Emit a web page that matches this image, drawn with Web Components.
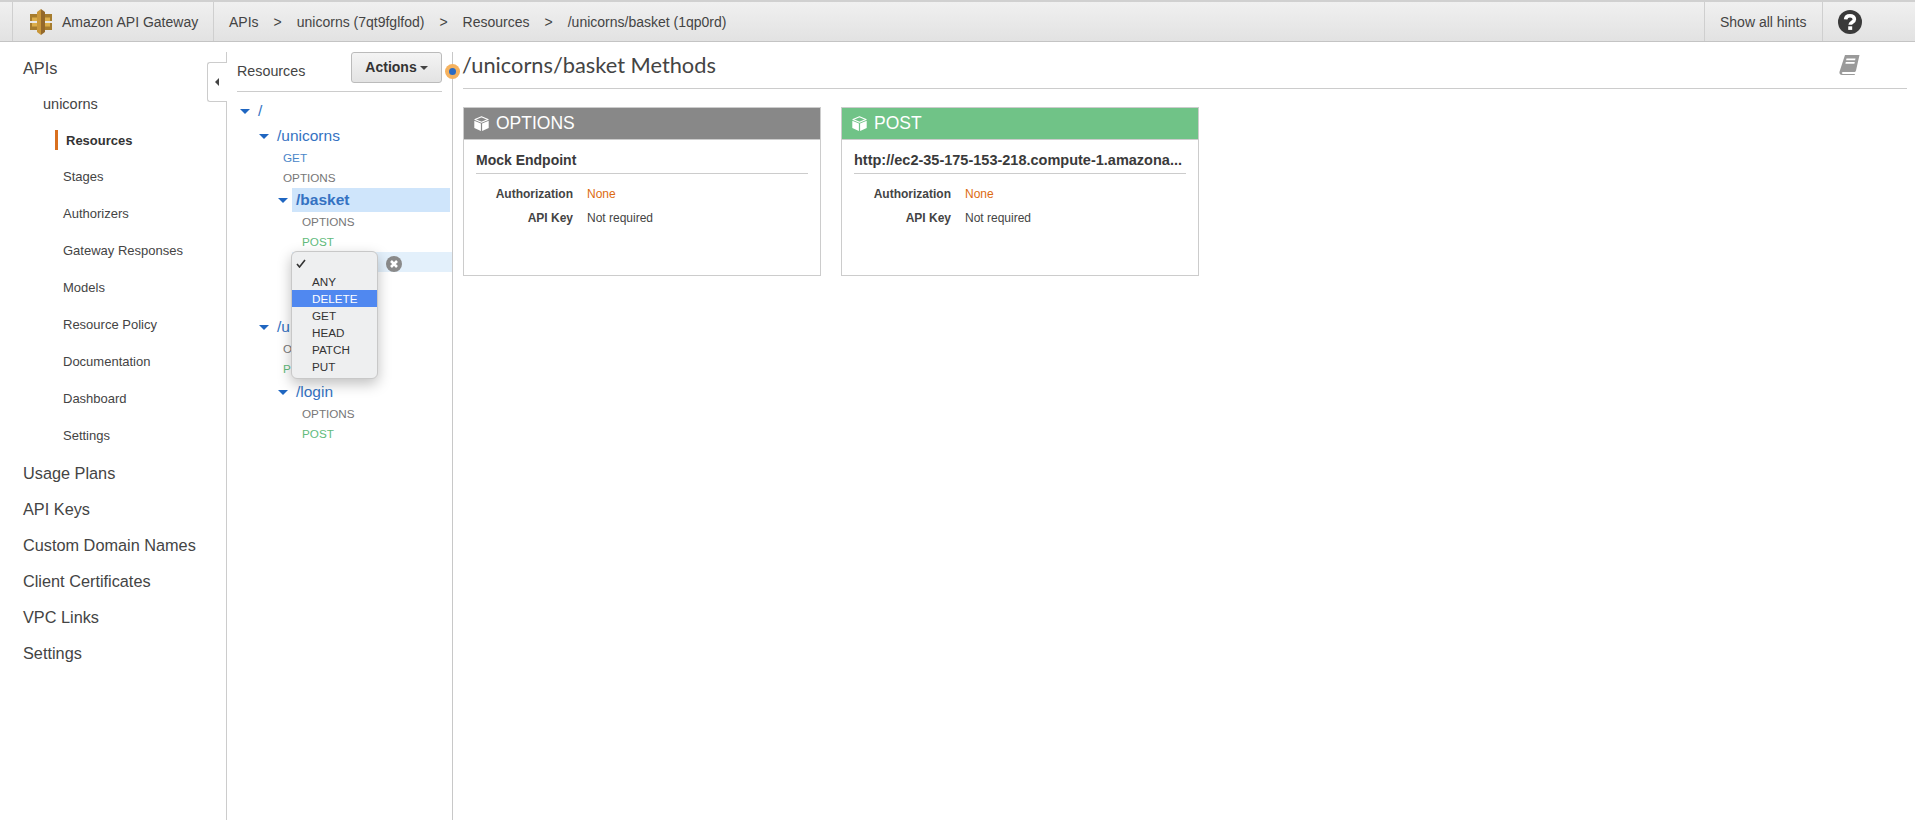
<!DOCTYPE html>
<html>
<head>
<meta charset="utf-8">
<title>Amazon API Gateway</title>
<style>
  html, body { margin: 0; height: 100%; background: #fff; overflow: hidden; }
  body { font-family: "Liberation Sans", Arial, sans-serif; color: #444; display: flex; flex-direction: column; height: 820px; }
  .body-row { display: flex; flex: 1; min-height: 0; }
</style>
</head>
<body>
<aws-topbar>
  <top-crumb>APIs</top-crumb>
  <top-crumb>unicorns (7qt9fglfod)</top-crumb>
  <top-crumb>Resources</top-crumb>
  <top-crumb last>/unicorns/basket (1qp0rd)</top-crumb>
</aws-topbar>
<div class="body-row">
  <side-nav>
    <nav-link level="0">APIs</nav-link>
    <nav-link level="1">unicorns</nav-link>
    <nav-link level="2" active>Resources</nav-link>
    <nav-link level="2">Stages</nav-link>
    <nav-link level="2">Authorizers</nav-link>
    <nav-link level="2">Gateway Responses</nav-link>
    <nav-link level="2">Models</nav-link>
    <nav-link level="2">Resource Policy</nav-link>
    <nav-link level="2">Documentation</nav-link>
    <nav-link level="2">Dashboard</nav-link>
    <nav-link level="2">Settings</nav-link>
    <nav-link level="0" style="margin-top:1px">Usage Plans</nav-link>
    <nav-link level="0">API Keys</nav-link>
    <nav-link level="0">Custom Domain Names</nav-link>
    <nav-link level="0">Client Certificates</nav-link>
    <nav-link level="0">VPC Links</nav-link>
    <nav-link level="0">Settings</nav-link>
  </side-nav>
  <resource-panel>
    <tree-res depth="0">/</tree-res>
    <tree-res depth="1" style="margin-top:1px">/unicorns</tree-res>
    <tree-method depth="2" kind="get">GET</tree-method>
    <tree-method depth="2">OPTIONS</tree-method>
    <tree-res depth="2" selected>/basket</tree-res>
    <tree-method depth="3">OPTIONS</tree-method>
    <tree-method depth="3" kind="post">POST</tree-method>
    <new-method-row></new-method-row>
    <tree-res depth="1" style="margin-top:43px">/u</tree-res>
    <tree-method depth="2">O</tree-method>
    <tree-method depth="2" kind="post">P</tree-method>
    <tree-res depth="2" style="margin-top:1px">/login</tree-res>
    <tree-method depth="3">OPTIONS</tree-method>
    <tree-method depth="3" kind="post">POST</tree-method>
    <method-menu slot="overlay">
      <menu-opt checked></menu-opt>
      <menu-opt>ANY</menu-opt>
      <menu-opt hot>DELETE</menu-opt>
      <menu-opt>GET</menu-opt>
      <menu-opt>HEAD</menu-opt>
      <menu-opt>PATCH</menu-opt>
      <menu-opt>PUT</menu-opt>
    </method-menu>
  </resource-panel>
  <main-pane heading="/unicorns/basket Methods">
    <method-card verb="OPTIONS" color="#888888" endpoint="Mock Endpoint" ep-size="14"></method-card>
    <method-card verb="POST" color="#70c387" endpoint="http://ec2-35-175-153-218.compute-1.amazona..." ep-size="14.500"></method-card>
  </main-pane>
</div>

<script>
function shadow(el, html) {
  el.attachShadow({mode: 'open'}).innerHTML = html;
}

class AwsTopbar extends HTMLElement {
  constructor() {
    super();
    shadow(this, `<style>
      :host { display: flex; align-items: stretch; height: 39px; flex: none; font-size: 14px; color: #444;
        border-top: 2px solid #d0d0d0; border-bottom: 1px solid #c4c4c4;
        background: linear-gradient(#f0f0f0, #e2e2e2); }
      .cell { display: flex; align-items: center; border-left: 1px solid #cfcfcf; box-sizing: border-box; }
      .lead { width: 12px; border-left: 0; }
      .brand { width: 201px; padding-left: 17px; gap: 10px; }
      .crumbs { flex: 1; padding-left: 15px; }
      .hints { width: 118px; padding-left: 15px; }
      .help { width: 93px; padding-left: 15px; }
      svg { display: block; flex: none; }
    </style>
    <div class="cell lead"></div>
    <div class="cell brand">
      <svg width="22" height="26" viewBox="0 0 22 26">
        <path fill="#a67c2d" d="M0 5h7v7H0zM0 14h7v7H0zM15 5h7v7h-7zM15 14h7v7h-7z"/>
        <path fill="#dcae4a" d="M2 8.500h5V12H2zM2 14h5v3.500H2zM15 8.500h5V12h-5zM15 14h5v3.500h-5z"/>
        <path fill="#c9973a" d="M7 3l4-3v26l-4-3z"/>
        <path fill="#94692a" d="M15 3l-4-3v26l4-3z"/>
      </svg>
      <span>Amazon API Gateway</span>
    </div>
    <div class="cell crumbs"><slot></slot></div>
    <div class="cell hints">Show all hints</div>
    <div class="cell help">
      <svg width="24" height="24" viewBox="0 0 24 24">
        <circle cx="12" cy="12" r="12" fill="#3a3a3a"/>
        <path fill="none" stroke="#fff" stroke-width="3.600" d="M7.600 9.400C7.800 7 9.600 5.700 12 5.700c2.600 0 4.400 1.400 4.400 3.500 0 3-4.200 3-4.200 5.600"/>
        <rect x="10.200" y="16.300" width="4" height="3.600" fill="#fff"/>
      </svg>
    </div>`);
  }
}
customElements.define('aws-topbar', AwsTopbar);

class TopCrumb extends HTMLElement {
  constructor() {
    super();
    shadow(this, `<style>
      :host { display: inline-flex; }
      i { font-style: normal; margin: 0 15px; }
    </style><slot></slot>${this.hasAttribute('last') ? '' : '<i>&gt;</i>'}`);
  }
}
customElements.define('top-crumb', TopCrumb);

class SideNav extends HTMLElement {
  constructor() {
    super();
    shadow(this, `<style>
      :host { display: block; width: 227px; flex: none; box-sizing: border-box; padding-top: 8px;
        background: linear-gradient(#ccc, #ccc) 226px 10px / 1px 100% no-repeat; }
    </style><slot></slot>`);
  }
}
customElements.define('side-nav', SideNav);

class NavLink extends HTMLElement {
  constructor() {
    super();
    let level = this.getAttribute('level');
    let left = {0: 23, 1: 43, 2: 63}[level];
    let size = level == 2 ? 13 : level == 1 ? 14.500 : 16.300;
    let active = this.hasAttribute('active');
    let h = level == 2 && !active ? 37 : 36;
    shadow(this, `<style>
      :host { display: flex; align-items: center; height: ${h}px; padding-left: ${left}px; font-size: ${size}px; color: #444; position: relative; }
      b { color: #333; padding-left: 3px; }
      u { position: absolute; left: 55px; top: 8px; width: 3px; height: 20px; background: #d9701f; }
    </style>${active ? '<u></u><b><slot></slot></b>' : '<slot></slot>'}`);
  }
}
customElements.define('nav-link', NavLink);

class ResourcePanel extends HTMLElement {
  constructor() {
    super();
    shadow(this, `<style>
      :host { display: block; width: 226px; flex: none; box-sizing: border-box; position: relative; padding: 10px 0 0 10px;
        background: linear-gradient(#c8c8c8, #c8c8c8) 225px 10px / 1px 100% no-repeat; }
      .head { display: flex; align-items: center; justify-content: space-between; width: 205px; height: 40px; box-sizing: border-box; padding-bottom: 9px; border-bottom: 1px solid #ccc; font-size: 14.300px; }
      .head span { margin-top: 7px; }
      button { width: 91px; height: 31px; font: bold 14px "Liberation Sans", Arial, sans-serif; color: #333; border: 1px solid #bbb; border-radius: 3px; background: linear-gradient(#f4f4f4, #e3e3e3); padding: 0; }
      button i { display: inline-block; margin-left: 3px; vertical-align: 2px; border: 4px solid transparent; border-top-color: #444; border-bottom: 0; }
      .tree { margin-top: 7px; margin-left: -10px; }
      .tab { position: absolute; left: -20px; top: 20px; width: 20px; height: 40px; box-sizing: border-box; background: #fff; border: 1px solid #ccc; border-right: 0; border-radius: 3px 0 0 3px; display: flex; align-items: center; justify-content: center; }
      .tab i { border: 4px solid transparent; border-right-color: #444; border-left: 0; margin-right: 2px; }
      .beacon { position: absolute; right: -7px; top: 22px; width: 15px; height: 15px; border-radius: 50%; background: #f5b25f; display: flex; align-items: center; justify-content: center; z-index: 2; }
      .beacon i { width: 7px; height: 7px; border-radius: 50%; background: #2a6bc4; }
    </style>
    <div class="tab"><i></i></div>
    <div class="head"><span>Resources</span><button>Actions<i></i></button></div>
    <div class="tree"><slot></slot></div>
    <slot name="overlay"></slot>
    <div class="beacon"><i></i></div>`);
  }
}
customElements.define('resource-panel', ResourcePanel);

class TreeRes extends HTMLElement {
  constructor() {
    super();
    let depth = +this.getAttribute('depth');
    let sel = this.hasAttribute('selected');
    shadow(this, `<style>
      :host { display: flex; align-items: center; height: 24px; padding-left: ${13 + depth * 19}px; color: #3472c2; font-size: 15.500px; }
      i { flex: none; width: 0; border: 5px solid transparent; border-top: 5px solid #1f66c1; border-bottom: 0; }
      span { display: block; flex: 1; margin-left: 4px; padding-left: 4px; line-height: 24px; ${sel ? 'background: #cfe5fb; font-weight: bold; margin-right: 3px;' : ''} }
    </style><i></i><span><slot></slot></span>`);
  }
}
customElements.define('tree-res', TreeRes);

class TreeMethod extends HTMLElement {
  constructor() {
    super();
    let depth = +this.getAttribute('depth');
    let kind = this.getAttribute('kind');
    let color = kind == 'get' ? '#4a86c8' : kind == 'post' ? '#62bb7c' : '#777';
    shadow(this, `<style>
      :host { display: flex; align-items: center; height: 20px; box-sizing: border-box; padding: 0 0 2px ${18 + depth * 19}px; color: ${color}; font-size: 11.700px; }
    </style><slot></slot>`);
  }
}
customElements.define('tree-method', TreeMethod);

class NewMethodRow extends HTMLElement {
  constructor() {
    super();
    shadow(this, `<style>
      :host { display: flex; align-items: center; height: 20px; background: #e3f0fb; margin: 0 1px 0 65px; padding-left: 94px; }
      svg { display: block; margin-top: 4px; }
    </style>
    <svg width="16" height="16" viewBox="0 0 16 16">
      <circle cx="8" cy="8" r="8" fill="#8a8a8a"/>
      <path stroke="#fff" stroke-width="2.600" d="M5 5l6 6M11 5l-6 6"/>
    </svg>`);
  }
}
customElements.define('new-method-row', NewMethodRow);

class MethodMenu extends HTMLElement {
  constructor() {
    super();
    shadow(this, `<style>
      :host { display: block; position: absolute; left: 64px; top: 209px; width: 87px; box-sizing: border-box; padding: 4px 0 3px; background: #eeeff0; border: 1px solid #c8c8c8; border-radius: 6px; box-shadow: 0 5px 14px rgba(0,0,0,.25); z-index: 3; }
    </style><slot></slot>`);
  }
}
customElements.define('method-menu', MethodMenu);

class MenuOpt extends HTMLElement {
  constructor() {
    super();
    let hot = this.hasAttribute('hot');
    let checked = this.hasAttribute('checked');
    shadow(this, `<style>
      :host { display: block; position: relative; height: 17px; line-height: 17px; padding-left: 20px; font-size: 11.700px; color: ${hot ? '#fff' : '#333'}; background: ${hot ? '#5088f0' : 'transparent'}; }
      svg { position: absolute; left: 4px; top: 3px; }
    </style>${checked ? '<svg width="10" height="9" viewBox="0 0 10 9"><path fill="none" stroke="#333" stroke-width="1.600" d="M1 5l2.500 3L9 1"/></svg>' : ''}<slot></slot>`);
  }
}
customElements.define('menu-opt', MenuOpt);

class MainPane extends HTMLElement {
  constructor() {
    super();
    shadow(this, `<style>
      :host { display: block; flex: 1; min-width: 0; padding: 8px 8px 0 10px; box-sizing: border-box; }
      .title { display: flex; align-items: center; justify-content: space-between; height: 39px; box-sizing: border-box; border-bottom: 1px solid #ccc; padding-right: 47px; padding-bottom: 9px; }
      h1 { margin: 0 0 0 -1px; font: 400 21.800px Lato, sans-serif; color: #444; }
      .cards { display: flex; gap: 20px; margin-top: 18px; }
      svg { display: block; }
    </style>
    <div class="title"><h1>${this.getAttribute('heading')}</h1>
      <svg width="21" height="20" viewBox="0 0 21 20">
        <path fill="#9a9a9a" d="M6 0h14.500L17 15.500c-.3 1-1 1.500-2 1.500H4c-1 0-1.200.8-1.200 1s.2 1 1.200 1h12l-.4 1H3C1.200 20 0 18.800.500 16.800z"/>
        <path fill="#fff" d="M7.500 3.500h9l-.4 1.800h-9zM6.800 7h9l-.4 1.800h-9z"/>
      </svg>
    </div>
    <div class="cards"><slot></slot></div>`);
  }
}
customElements.define('main-pane', MainPane);

class MethodCard extends HTMLElement {
  constructor() {
    super();
    shadow(this, `<style>
      :host { display: block; width: 358px; height: 169px; box-sizing: border-box; border: 1px solid #ccc; }
      header { display: flex; align-items: center; gap: 7px; height: 32px; box-sizing: border-box; padding-left: 10px; background: ${this.getAttribute('color')}; color: #fff; font-size: 17.500px; border-bottom: 1px solid #ccc; }
      svg { display: block; flex: none; }
      .body { padding: 0 12px; }
      .ep { height: 34px; line-height: 41px; box-sizing: border-box; border-bottom: 1px solid #ccc; font-weight: bold; font-size: ${this.getAttribute('ep-size')}px; color: #3a3a3a; white-space: nowrap; }
      dl { display: grid; grid-template-columns: 97px 1fr; column-gap: 14px; row-gap: 8px; margin: 12px 0 0; font-size: 12px; line-height: 16px; }
      dt { font-weight: bold; text-align: right; color: #444; }
      dd { margin: 0; color: #444; }
      .none { color: #dd6b10; }
    </style>
    <header>
      <svg width="15" height="15" viewBox="0 0 15 15">
        <path fill="none" stroke="#fff" stroke-width="1.200" stroke-linejoin="round" d="M7.500 .8L14 3.500 7.500 6.200 1 3.500z"/>
        <path fill="#fff" d="M.3 4.800L6.900 7.500V15L.3 12z"/>
        <path fill="#fff" d="M14.700 4.800L8.100 7.500V15l6.600-3z"/>
      </svg>
      <span>${this.getAttribute('verb')}</span>
    </header>
    <div class="body">
      <div class="ep">${this.getAttribute('endpoint')}</div>
      <dl><dt>Authorization</dt><dd class="none">None</dd><dt>API Key</dt><dd>Not required</dd></dl>
    </div>`);
  }
}
customElements.define('method-card', MethodCard);
</script>
</body>
</html>
